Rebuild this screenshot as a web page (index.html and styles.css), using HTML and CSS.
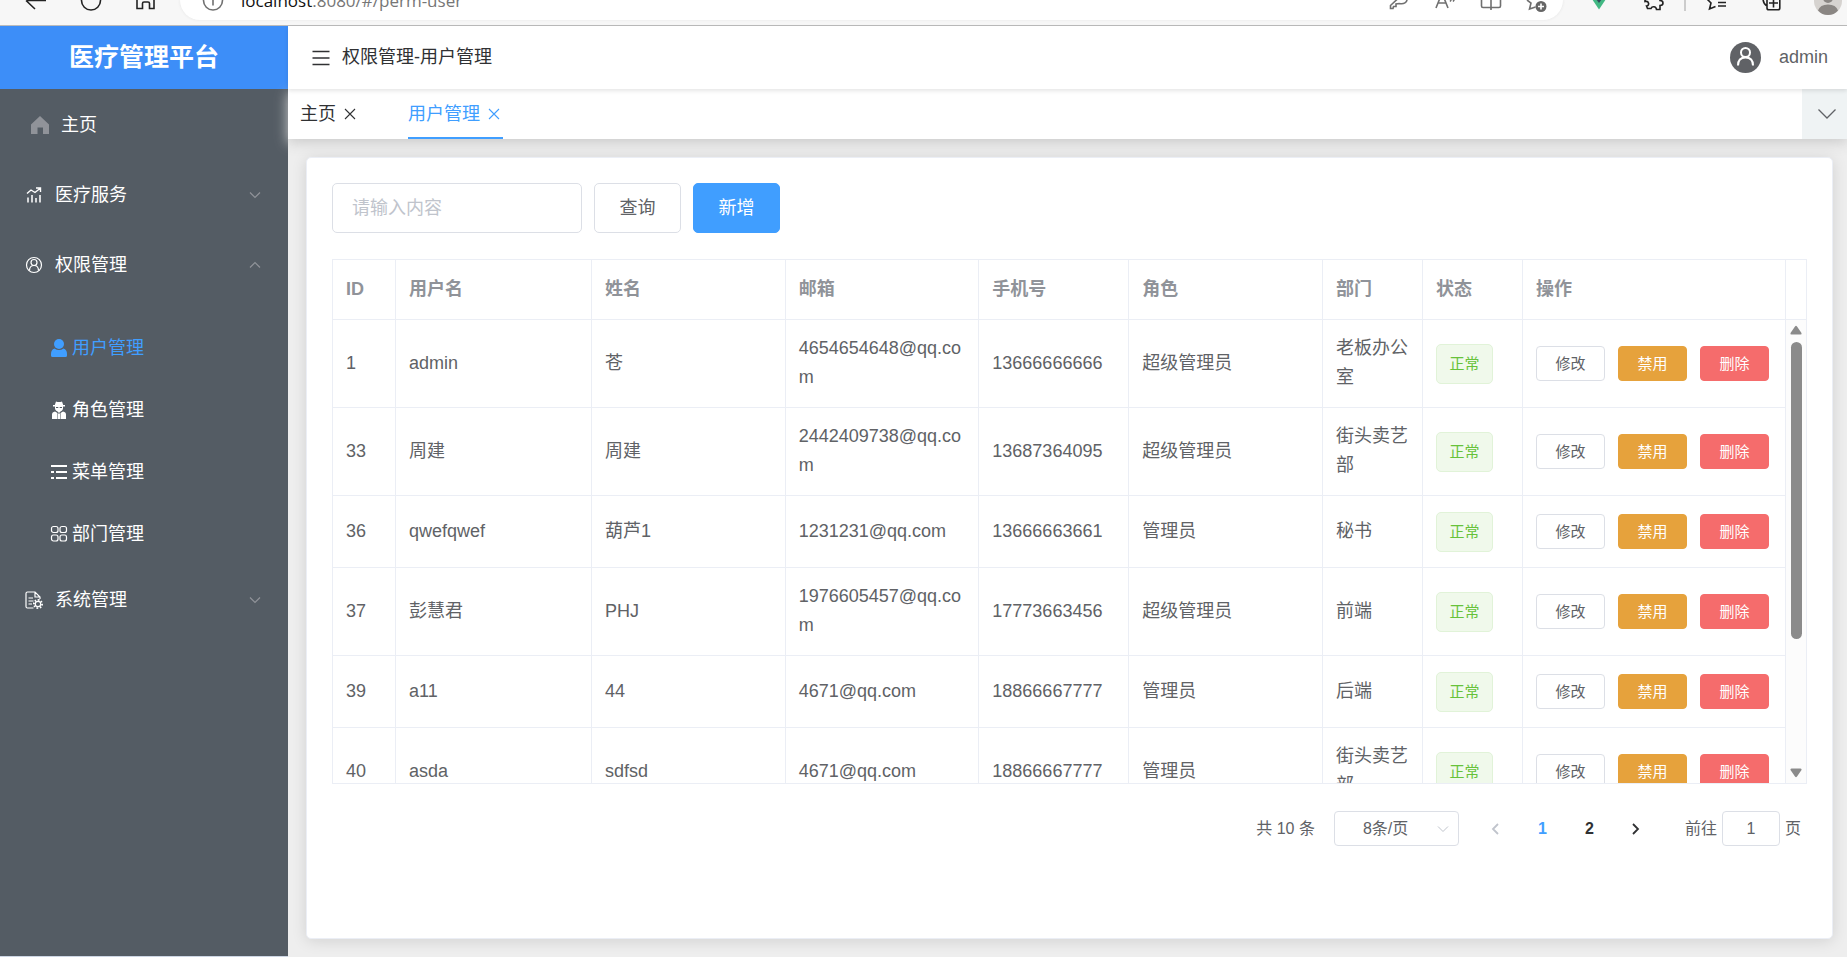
FILE: index.html
```html
<!DOCTYPE html>
<html lang="zh-CN">
<head>
<meta charset="utf-8">
<title>医疗管理平台</title>
<link rel="stylesheet" href="styles.css">
</head>
<body>
<div class="browser">
  <svg class="browser-icon" viewBox="0 0 24 25"><path d="M22 0.5H2M2 .5l9 8.500M2 .5l4-4"/></svg>
  <svg class="browser-icon" viewBox="0 0 24 25"><circle cx="12" cy="0.500" r="9.500"/></svg>
  <svg class="browser-icon" viewBox="0 0 24 25"><path d="M3-2V8.500h5.500V3.500q0-1.500 1.500-1.500h4q1.500 0 1.500 1.500v5H20V-2"/></svg>
  <div class="address">
    <svg class="browser-icon muted" viewBox="0 0 24 25"><circle cx="12" cy="0.500" r="9.500"/><path d="M12-2v7.500"/></svg>
    <span class="url"><b>localhost</b>:8080/#/perm-user</span>
    <svg class="browser-icon muted" viewBox="0 0 24 25"><path d="M12.500 3.500 9 4v2.500H6.500L6 8.500H3.500V5.500L11-1.500M12.500 3.500c4 1 8-1 7.500-5"/></svg>
    <svg class="browser-icon muted" viewBox="0 0 24 25"><path d="m3 8 6-15 6 15M5 3h8M17-2q2 1.500 0 3.500M20-2q2 1.500 0 3.500"/></svg>
    <svg class="browser-icon muted" viewBox="0 0 24 25"><path d="M2.500-2V6q0 1.500 1.500 1.500h7q1 0 1 2 0-2 1-2h7q1.500 0 1.500-1.500V-2M12-2v12"/></svg>
    <svg class="browser-icon muted" viewBox="0 0 24 25"><path d="m2 0 4 3-1.500 6 6-2"/><circle cx="16" cy="6.500" r="5.500" fill="#666" stroke="none"/><path d="M16 3.500v6M13 6.500h6" stroke="#fff"/></svg>
  </div>
  <svg class="browser-icon" viewBox="0 0 24 25"><path d="M5-1h14l-7 10.500z" fill="#42b883" stroke="none"/><path d="M9-1h6l-3 4z" fill="#35495e" stroke="none"/></svg>
  <svg class="browser-icon" viewBox="0 0 24 25"><path d="M3-1v2.500c4-1 5 4 1.500 4.500l1 2.500H9c1-2.500 5-2.500 5.500 1h3.500V5.500c4 0 4-5 0-5V-2"/></svg>
  <span class="browser-rule"></span>
  <svg class="browser-icon" viewBox="0 0 24 25"><path d="m3-1 4 4-1.500 6 6-2.500M14-1h8M14 2.500h8M14 6h8"/></svg>
  <svg class="browser-icon" viewBox="0 0 24 25"><path d="M8-2V8q0 1.800 1.800 1.800H19q1.800 0 1.800-1.800V-2M14.500-1.500v9M10 3h9M4-2q0 6 4 8"/></svg>
  <svg class="browser-user" viewBox="0 0 28 25"><circle cx="14" cy="1" r="14" fill="#d6d3d0"/><circle cx="14" cy="-2" r="5" fill="#8a8683"/><path d="M4 10.500Q6 4.500 14 4.500t10 6Q20 15 14 15T4 10.500z" fill="#8a8683"/></svg>
</div>

<div class="app">
  <aside class="sidebar">
    <h1 class="brand">医疗管理平台</h1>
    <nav class="menu">
      <a class="item home" href="#">
        <svg class="icon" viewBox="0 0 18 18"><path fill="#909399" d="M9 0 18 8.500V18h-6v-6.500H6.500V18H0V8.500z"/></svg>
        <span>主页</span>
      </a>
      <a class="item" href="#">
        <svg class="icon line" viewBox="0 0 18 18"><path d="M2 7.500 6 4l4 2.500 5-4M11 2h4.500v4" stroke-width="1.400"/><path d="M3 11.500v5M7 9V16.500M11 12V16.500M15 9V16.500" stroke-width="1.500"/></svg>
        <span>医疗服务</span>
        <svg class="arrow" viewBox="0 0 12 12"><path d="m1 3.500 5 5 5-5"/></svg>
      </a>
      <a class="item" href="#">
        <svg class="icon line" viewBox="0 0 18 18"><circle cx="9" cy="9" r="7.500"/><circle cx="9" cy="6.500" r="3"/><path d="M4.500 14.500q0-5 4.500-5t4.500 5"/></svg>
        <span>权限管理</span>
        <svg class="arrow" viewBox="0 0 12 12"><path d="m1 8.500 5-5 5 5"/></svg>
      </a>
      <div class="submenu">
        <a class="subitem active" href="#">
          <svg class="icon" viewBox="0 0 18 18"><circle cx="9" cy="5" r="5" fill="currentColor"/><path fill="currentColor" d="M4.500 9.500Q9 12.500 13.500 9.500 17 10.500 17 15v1.500q0 1.500-1.500 1.500h-13Q1 18 1 16.500V15q0-4.500 3.500-5.500z"/></svg>
          <span>用户管理</span>
        </a>
        <a class="subitem" href="#">
          <svg class="icon" viewBox="0 0 18 18"><path fill="currentColor" d="M6 .5q3 1 6 0l1.200 3.500H15v1.500h-2q.5 4-2.500 5L9 12l-1.500-1.500Q4.500 9.500 5 5.500H3V4h1.800zM5 10.500 7.500 12 7 18H2v-4.500q0-2.500 3-3zm8 0L10.500 12l.5 6h5v-4.500q0-2.500-3-3zM8 12.500h2l.5 5.500h-3z"/><path stroke="#545c64" d="M6 6.500h2.300M9.700 6.500H12"/></svg>
          <span>角色管理</span>
        </a>
        <a class="subitem" href="#">
          <svg class="icon line" viewBox="0 0 18 18"><path stroke-width="2" d="M1 3h16M1 9h3M6 9h11M1 15h3M6 15h11"/></svg>
          <span>菜单管理</span>
        </a>
        <a class="subitem" href="#">
          <svg class="icon line" viewBox="0 0 18 18"><rect x="1.500" y="1.500" width="6.500" height="6" rx="2"/><rect x="10" y="1.500" width="6.500" height="6" rx="2"/><rect x="1.500" y="10" width="6.500" height="6" rx="2"/><rect x="10" y="10" width="6.500" height="6" rx="2"/></svg>
          <span>部门管理</span>
        </a>
      </div>
      <a class="item" href="#">
        <svg class="icon line" viewBox="0 0 18 18"><path d="M8.500 17H2.500Q1 17 1 15.500v-13Q1 1 2.500 1H10l5 5v2M10 1v5h5M3.500 7H8M3.500 10h5M3.500 13H7" /><circle cx="13" cy="13" r="2.700"/><path stroke-dasharray="1.600 1.500" stroke-width="1.800" d="M13 8.900a4.100 4.100 0 1 1-.01 0"/></svg>
        <span>系统管理</span>
        <svg class="arrow" viewBox="0 0 12 12"><path d="m1 3.500 5 5 5-5"/></svg>
      </a>
    </nav>
  </aside>

  <div class="main">
    <header class="header">
      <button class="icon-button" type="button" aria-label="折叠菜单"><svg viewBox="0 0 18 18"><path d="M.5 2.500h17M.5 9h17M.5 15.500h17"/></svg></button>
      <span class="crumb">权限管理-用户管理</span>
      <svg class="avatar" viewBox="0 0 31 31"><circle cx="15.500" cy="15.500" r="15.500" fill="#606266"/><circle cx="15.500" cy="10.500" r="4.500" fill="none" stroke="#fff" stroke-width="2"/><path d="M8 23.500q0-8 7.500-8t7.500 8" fill="none" stroke="#fff" stroke-width="2"/></svg>
      <span class="account">admin</span>
    </header>
    <div class="tabs">
      <div class="tab"><a href="#">主页</a><button class="close" type="button" aria-label="关闭主页"><svg viewBox="0 0 12 12"><path d="m1 1 10 10M11 1 1 11"/></svg></button></div>
      <div class="tab current"><a href="#">用户管理</a><button class="close" type="button" aria-label="关闭用户管理"><svg viewBox="0 0 12 12"><path d="m1 1 10 10M11 1 1 11"/></svg></button></div>
      <button class="more" type="button" aria-label="更多"><svg viewBox="0 0 18 10"><path d="m.5.500 8.500 8.500 8.500-8.500"/></svg></button>
    </div>

    <main class="card">
      <form class="toolbar">
        <input class="search" type="text" placeholder="请输入内容" aria-label="请输入内容">
        <button class="button" type="button">查询</button>
        <button class="button primary" type="button">新增</button>
      </form>

      <div class="grid">
        <div class="grid-head">
          <table>
            <colgroup><col class="c-id"><col class="c-name"><col><col><col class="c-phone"><col><col class="c-small"><col class="c-small"><col class="c-ops"></colgroup>
            <thead><tr><th>ID</th><th>用户名</th><th>姓名</th><th>邮箱</th><th>手机号</th><th>角色</th><th>部门</th><th>状态</th><th>操作</th></tr></thead>
          </table>
          <div class="gutter"></div>
        </div>
        <div class="grid-body">
          <table>
            <colgroup><col class="c-id"><col class="c-name"><col><col><col class="c-phone"><col><col class="c-small"><col class="c-small"><col class="c-ops"></colgroup>
            <tbody>
              <tr><td>1</td><td>admin</td><td>苍</td><td>4654654648@qq.com</td><td>13666666666</td><td>超级管理员</td><td>老板办公室</td><td><span class="tag">正常</span></td><td><div class="ops"><button class="small" type="button">修改</button><button class="small warn" type="button">禁用</button><button class="small danger" type="button">删除</button></div></td></tr>
              <tr><td>33</td><td>周建</td><td>周建</td><td>2442409738@qq.com</td><td>13687364095</td><td>超级管理员</td><td>街头卖艺部</td><td><span class="tag">正常</span></td><td><div class="ops"><button class="small" type="button">修改</button><button class="small warn" type="button">禁用</button><button class="small danger" type="button">删除</button></div></td></tr>
              <tr><td>36</td><td>qwefqwef</td><td>葫芦1</td><td>1231231@qq.com</td><td>13666663661</td><td>管理员</td><td>秘书</td><td><span class="tag">正常</span></td><td><div class="ops"><button class="small" type="button">修改</button><button class="small warn" type="button">禁用</button><button class="small danger" type="button">删除</button></div></td></tr>
              <tr><td>37</td><td>彭慧君</td><td>PHJ</td><td>1976605457@qq.com</td><td>17773663456</td><td>超级管理员</td><td>前端</td><td><span class="tag">正常</span></td><td><div class="ops"><button class="small" type="button">修改</button><button class="small warn" type="button">禁用</button><button class="small danger" type="button">删除</button></div></td></tr>
              <tr><td>39</td><td>a11</td><td>44</td><td>4671@qq.com</td><td>18866667777</td><td>管理员</td><td>后端</td><td><span class="tag">正常</span></td><td><div class="ops"><button class="small" type="button">修改</button><button class="small warn" type="button">禁用</button><button class="small danger" type="button">删除</button></div></td></tr>
              <tr><td>40</td><td>asda</td><td>sdfsd</td><td>4671@qq.com</td><td>18866667777</td><td>管理员</td><td>街头卖艺部</td><td><span class="tag">正常</span></td><td><div class="ops"><button class="small" type="button">修改</button><button class="small warn" type="button">禁用</button><button class="small danger" type="button">删除</button></div></td></tr>
            </tbody>
          </table>
          <div class="scrollbar">
            <svg viewBox="0 0 12 10"><path d="M5 1.500q1-1.500 2 0l4.500 6.500q.5 1.500-1 1.500h-9q-1.500 0-1-1.500z"/></svg>
            <div class="track"><div class="thumb"></div></div>
            <svg viewBox="0 0 12 10"><path d="M5 8.500q1 1.500 2 0L11.500 2q.5-1.500-1-1.500h-9Q0 .5.500 2z"/></svg>
          </div>
        </div>
      </div>

      <div class="pager">
        <span class="total">共 10 条</span>
        <div class="size">
          <select aria-label="每页条数"><option>8条/页</option></select>
          <svg viewBox="0 0 12 12"><path d="m1 3.500 5 5 5-5"/></svg>
        </div>
        <div class="pages">
          <button class="page off" type="button" aria-label="上一页"><svg viewBox="0 0 8 12"><path d="M7 1 2 6l5 5"/></svg></button>
          <button class="page on" type="button">1</button>
          <button class="page" type="button">2</button>
          <button class="page" type="button" aria-label="下一页"><svg viewBox="0 0 8 12"><path d="m1 1 5 5-5 5"/></svg></button>
        </div>
        <label class="jump">前往<input type="text" value="1">页</label>
      </div>
    </main>
  </div>
</div>
</body>
</html>
```
FILE: styles.css
```css
* { box-sizing: border-box; }

body {
  margin: 0;
  min-height: 100vh;
  display: flex;
  flex-direction: column;
  font: 18px/29px "Liberation Sans", "Noto Sans CJK SC", sans-serif;
  color: #606266;
  background: #eee;
}

a { color: inherit; text-decoration: none; }
button, input, select { font: inherit; color: inherit; margin: 0; }
button { padding: 0; border: 0; background: none; cursor: pointer; }
svg { flex: none; display: block; }

/* Browser toolbar */
.browser {
  display: flex;
  gap: 31px;
  height: 26px;
  padding: 0 5px 0 24px;
  overflow: hidden;
  background: #f7f7f7;
  border-bottom: 1px solid #bbb;
}
.browser-icon { width: 24px; height: 25px; fill: none; stroke: #222; stroke-width: 1.6; }
.browser-icon.muted { stroke: #707070; }
.browser-user { width: 28px; height: 25px; }
.browser-rule { width: 2px; height: 11px; margin: 0 -13px; background: #ccc; }
.address {
  flex: 1;
  display: flex;
  gap: 22px;
  height: 20px;
  margin: 0 -7px 0 -9px;
  padding: 0 14px 0 21px;
  background: #fff;
  border-radius: 0 0 20px 20px;
  box-shadow: 0 0 3px #e4e4e4;
}
.url {
  flex: 1;
  margin: -11px 0 0 -6px;
  font: 17px/24px "Open Sans", sans-serif;
  color: #767676;
}
.url b { font-weight: 400; color: #111; }

.app { flex: 1; display: flex; }

/* Sidebar */
.sidebar { width: 288px; flex: none; color: #fff; background: #545c64; border-bottom: 1px solid #cdd6e4; }
.brand {
  margin: 0;
  font-size: 25px;
  line-height: 63px;
  text-align: center;
  background: #3d8ef8;
}
.menu { padding-top: 1px; }
.item { display: flex; align-items: center; height: 70px; padding: 0 27px 0 25px; }
.item .icon { margin-right: 12px; }
.home { padding-left: 31px; }
.icon { width: 18px; height: 18px; }
.line { fill: none; stroke: currentColor; stroke-width: 1.2; }
.arrow { width: 12px; height: 12px; margin-left: auto; fill: none; stroke: #909399; stroke-width: 1.2; }
.submenu { padding-top: 17px; }
.subitem { display: flex; align-items: center; gap: 4px; height: 62px; padding-left: 50px; }
.active { color: #409eff; }

/* Header and tabs */
.main { flex: 1; min-width: 0; display: flex; flex-direction: column; }
.header {
  position: relative;
  z-index: 2;
  display: flex;
  align-items: center;
  height: 63px;
  padding: 0 19px 0 24px;
  color: #303133;
  background: #fff;
  box-shadow: 0 2px 4px rgba(0, 0, 0, .1);
}
.icon-button svg { width: 18px; height: 18px; fill: none; stroke: #303133; stroke-width: 1.5; }
.crumb { margin-left: 12px; }
.avatar { width: 31px; height: 31px; margin-left: auto; }
.account { margin-left: 18px; color: #606266; }

.tabs {
  position: relative;
  z-index: 1;
  display: flex;
  gap: 49px;
  height: 50px;
  padding-left: 12px;
  color: #303133;
  background: #fff;
  box-shadow: 0 4px 12px #ccc;
}
.tab { display: flex; align-items: center; padding-top: 2px; border-bottom: 2px solid transparent; }
.current { color: #409eff; border-color: #409eff; }
.close { display: grid; place-items: center; width: 18px; height: 18px; margin-left: 5px; }
.close svg { width: 12px; height: 12px; fill: none; stroke: currentColor; stroke-width: 1.1; }
.more { display: grid; place-items: center; width: 45px; margin-left: auto; padding-left: 5px; background: #eff3f4; }
.more svg { width: 18px; height: 10px; fill: none; stroke: #606266; stroke-width: 1.3; }

/* Content card */
.card {
  flex: 1;
  margin: 18px 14px 18px 18px;
  padding: 25px;
  background: #fff;
  border: 1px solid #ebeef5;
  border-radius: 5px;
  box-shadow: 0 2px 15px rgba(0, 0, 0, .12);
}
.toolbar { display: flex; gap: 12px; margin-bottom: 26px; }
.search { width: 250px; height: 50px; padding: 0 19px; border: 1px solid #dcdfe6; border-radius: 5px; }
.search::placeholder { color: #c0c4cc; }
.button { width: 87px; height: 50px; border: 1px solid #dcdfe6; border-radius: 5px; }
.primary { color: #fff; background: #409eff; border-color: #409eff; }

/* User table */
.grid { border: 1px solid #ebeef5; }
.grid-head, .grid-body { display: flex; }
.grid-head { border-bottom: 1px solid #ebeef5; }
.grid-body { height: 463px; overflow: hidden; }
.gutter { width: 20px; }
table { flex: 1; min-width: 0; width: 100%; table-layout: fixed; border-collapse: separate; border-spacing: 0; }
.grid-body table { align-self: flex-start; }
th { height: 59px; padding: 0 13px; text-align: left; color: #909399; border-right: 1px solid #ebeef5; }
td {
  height: 72px;
  padding: 14px 13px 15px;
  overflow-wrap: anywhere;
  border-right: 1px solid #ebeef5;
  border-bottom: 1px solid #ebeef5;
}
td:nth-child(n+8) { padding-top: 0; padding-bottom: 0; }
.c-id { width: 63px; }
.c-name { width: 196px; }
.c-phone { width: 150px; }
.c-small { width: 100px; }
.c-ops { width: 263px; }
.tag {
  display: block;
  width: 57px;
  font-size: 15px;
  line-height: 38px;
  text-align: center;
  color: #67c23a;
  background: #f0f9eb;
  border: 1px solid #e1f3d8;
  border-radius: 5px;
}
.ops { display: flex; gap: 13px; }
.small { width: 69px; height: 35px; font-size: 15px; border: 1px solid #dcdfe6; border-radius: 4px; }
.warn { color: #fff; background: #e6a23c; border-color: #e6a23c; }
.danger { color: #fff; background: #f56c6c; border-color: #f56c6c; }

.scrollbar {
  display: flex;
  flex-direction: column;
  align-items: center;
  gap: 7px;
  width: 20px;
  padding: 5px 0;
  background: #fcfcfc;
}
.scrollbar svg { width: 12px; height: 10px; fill: #8b8b8b; }
.track { flex: 1; width: 11px; }
.thumb { height: 71%; border-radius: 6px; background: #8b8b8b; }

/* Pagination */
.pager {
  display: flex;
  align-items: center;
  justify-content: flex-end;
  margin-top: 27px;
  padding-right: 6px;
  font-size: 16px;
}
.size { position: relative; margin-left: 19px; }
.size select {
  display: block;
  width: 125px;
  height: 35px;
  padding: 0 28px;
  appearance: none;
  background: #fff;
  border: 1px solid #dcdfe6;
  border-radius: 4px;
}
.size svg { position: absolute; top: 12px; right: 10px; width: 12px; height: 12px; fill: none; stroke: #c0c4cc; pointer-events: none; }
.pages { display: flex; margin: 0 25px 0 13px; }
.page { display: grid; place-items: center; width: 47px; height: 35px; font-weight: 700; color: #303133; }
.page svg { width: 8px; height: 12px; fill: none; stroke: currentColor; stroke-width: 1.8; }
.off { color: #c0c4cc; }
.on { color: #409eff; }
.jump { display: flex; align-items: center; gap: 5px; }
.jump input { width: 58px; height: 35px; padding: 0; text-align: center; border: 1px solid #dcdfe6; border-radius: 4px; }
```
